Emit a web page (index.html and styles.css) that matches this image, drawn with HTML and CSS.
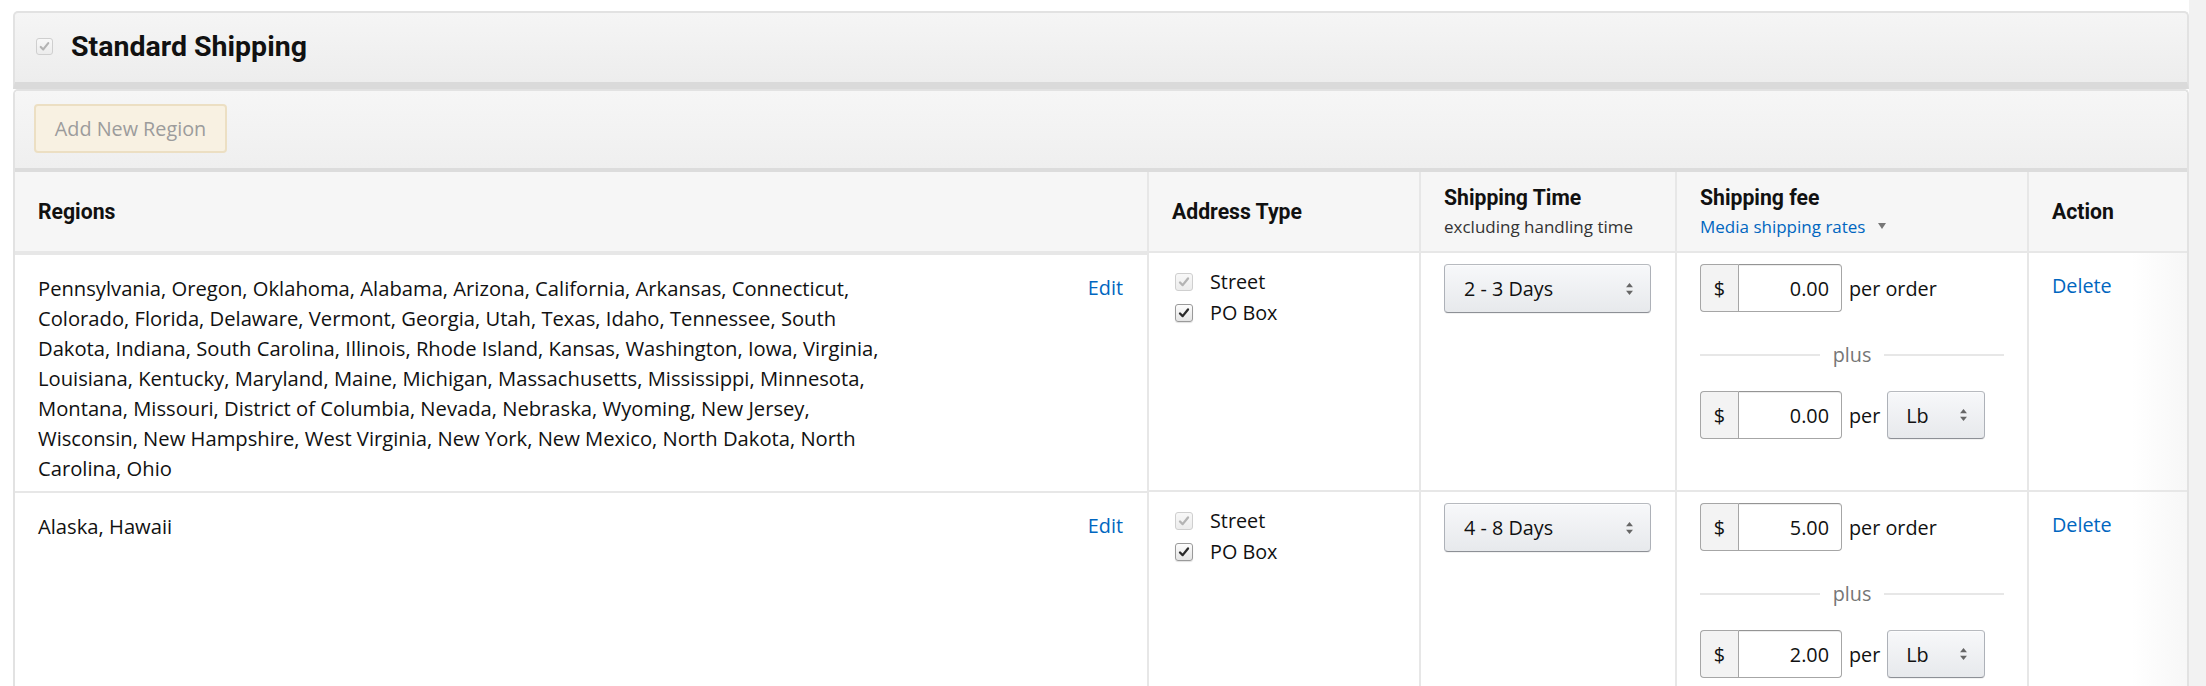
FILE: index.html
```html
<!DOCTYPE html>
<html lang="en">
<head>
    <meta charset="UTF-8">
    <title>Shipping Settings</title>
    <link rel="stylesheet" href="styles.css">
</head>
<body>
    <div class="page">
        <div class="panel-head">
            <span class="cb cb-off"><svg viewBox="0 0 18 18"><path d="M4.5 9.5 L7.5 12.5 L13.5 5"/></svg></span>
            <h2>Standard Shipping</h2>
        </div>

        <div class="panel-body">
            <div class="toolbar">
                <button class="btn-add" disabled>Add New Region</button>
            </div>

            <table class="regions">
                <colgroup>
                    <col style="width: 1133px">
                    <col style="width: 272px">
                    <col style="width: 256px">
                    <col style="width: 352px">
                    <col>
                </colgroup>
                <thead>
                    <tr>
                        <th>Regions</th>
                        <th>Address Type</th>
                        <th>Shipping Time<div class="sub">excluding handling time</div></th>
                        <th>Shipping fee<div class="sub"><a href="#" class="link">Media shipping rates</a> <svg class="caret" viewBox="0 0 8 6"><polygon points="0,0 8,0 4,6"/></svg></div></th>
                        <th>Action</th>
                    </tr>
                </thead>
                <tbody>
                    <tr>
                        <td class="region">
                            <div class="names">Pennsylvania, Oregon, Oklahoma, Alabama, Arizona, California, Arkansas, Connecticut, Colorado, Florida, Delaware, Vermont, Georgia, Utah, Texas, Idaho, Tennessee, South Dakota, Indiana, South Carolina, Illinois, Rhode Island, Kansas, Washington, Iowa, Virginia, Louisiana, Kentucky, Maryland, Maine, Michigan, Massachusetts, Mississippi, Minnesota, Montana, Missouri, District of Columbia, Nevada, Nebraska, Wyoming, New Jersey, Wisconsin, New Hampshire, West Virginia, New York, New Mexico, North Dakota, North Carolina, Ohio</div>
                            <a href="#" class="link">Edit</a>
                        </td>
                        <td class="types">
                            <div class="opt"><span class="cb cb-off"><svg viewBox="0 0 18 18"><path d="M4.5 9.5 L7.5 12.5 L13.5 5"/></svg></span>Street</div>
                            <div class="opt"><span class="cb"><svg viewBox="0 0 18 18"><path d="M4.5 9.5 L7.5 12.5 L13.5 5"/></svg></span>PO Box</div>
                        </td>
                        <td class="time">
                            <div class="select select-days">2 - 3 Days<svg class="arrows" viewBox="0 0 8 14"><polygon points="0,5 4,0 8,5"/><polygon points="0,9 4,14 8,9"/></svg></div>
                        </td>
                        <td class="fee">
                            <div class="fee-line">
                                <div class="money"><span class="cur">$</span><input class="amount" value="0.00"></div>
                                <span class="per">per order</span>
                            </div>
                            <div class="plus">plus</div>
                            <div class="fee-line">
                                <div class="money"><span class="cur">$</span><input class="amount" value="0.00"></div>
                                <span class="per">per</span>
                                <div class="select select-unit">Lb<svg class="arrows" viewBox="0 0 8 14"><polygon points="0,5 4,0 8,5"/><polygon points="0,9 4,14 8,9"/></svg></div>
                            </div>
                        </td>
                        <td class="action"><a href="#" class="link">Delete</a></td>
                    </tr>
                    <tr>
                        <td class="region">
                            <div class="names">Alaska, Hawaii</div>
                            <a href="#" class="link">Edit</a>
                        </td>
                        <td class="types">
                            <div class="opt"><span class="cb cb-off"><svg viewBox="0 0 18 18"><path d="M4.5 9.5 L7.5 12.5 L13.5 5"/></svg></span>Street</div>
                            <div class="opt"><span class="cb"><svg viewBox="0 0 18 18"><path d="M4.5 9.5 L7.5 12.5 L13.5 5"/></svg></span>PO Box</div>
                        </td>
                        <td class="time">
                            <div class="select select-days">4 - 8 Days<svg class="arrows" viewBox="0 0 8 14"><polygon points="0,5 4,0 8,5"/><polygon points="0,9 4,14 8,9"/></svg></div>
                        </td>
                        <td class="fee">
                            <div class="fee-line">
                                <div class="money"><span class="cur">$</span><input class="amount" value="5.00"></div>
                                <span class="per">per order</span>
                            </div>
                            <div class="plus">plus</div>
                            <div class="fee-line">
                                <div class="money"><span class="cur">$</span><input class="amount" value="2.00"></div>
                                <span class="per">per</span>
                                <div class="select select-unit">Lb<svg class="arrows" viewBox="0 0 8 14"><polygon points="0,5 4,0 8,5"/><polygon points="0,9 4,14 8,9"/></svg></div>
                            </div>
                        </td>
                        <td class="action"><a href="#" class="link">Delete</a></td>
                    </tr>
                </tbody>
            </table>
        </div>
    </div>
</body>
</html>
```

FILE: styles.css
```css
body {
    margin: 0;
    font-family: "Open Sans", "Liberation Sans", sans-serif;
    font-size: 19.8px;
    color: #111;
    background: linear-gradient(to right, #fff 2189px, #f2f2f2 2189px);
}
.page {
    padding: 11px 17px 0 13px;
}
.panel-head {
    display: flex;
    align-items: center;
    box-sizing: border-box;
    height: 78px;
    padding: 0 21px 2px;
    border: 2px solid #e2e2e2;
    border-bottom: 7px solid #dadada;
    border-radius: 5px 5px 0 0;
    background: linear-gradient(#f5f5f5, #ededed);
}
.panel-head h2 {
    margin: 0 0 0 18px;
    font-family: Roboto, "Liberation Sans", sans-serif;
    font-size: 28.5px;
    font-weight: 700;
    color: #111;
}
.panel-head .cb {
    width: 17px;
    height: 17px;
}
.panel-body {
    border: 2px solid #e2e2e2;
    border-bottom: 0;
    border-radius: 5px 5px 0 0;
    background: #fff;
}
.toolbar {
    padding: 13px 19px 15px;
    border-bottom: 4px solid #dcdcdc;
    border-radius: 4px 4px 0 0;
    background: linear-gradient(#f6f6f6, #efefef);
}
.btn-add {
    width: 193px;
    height: 49px;
    padding: 0;
    font-family: inherit;
    font-size: 19.8px;
    color: #9c9c9c;
    background: #f8f1e2;
    border: 2px solid #ecdfc3;
    border-radius: 4px;
}
.regions {
    width: 100%;
    border-collapse: collapse;
    table-layout: fixed;
}
.regions th {
    height: 79px;
    padding: 0 23px;
    text-align: left;
    font-family: Roboto, "Liberation Sans", sans-serif;
    font-size: 21.2px;
    font-weight: 700;
    line-height: 25px;
    background: #f6f6f6;
    border-left: 2px solid #e7e7e7;
    border-bottom: 2px solid #e7e7e7;
    vertical-align: middle;
}
.regions th .sub {
    margin-top: 6px;
    font-family: "Open Sans", "Liberation Sans", sans-serif;
    font-size: 17px;
    font-weight: 400;
    line-height: 22px;
    color: #333;
}
.caret {
    width: 8px;
    height: 6px;
    margin-left: 8px;
    fill: #777;
    vertical-align: 4px;
}
.regions td {
    padding: 11px 23px 30px;
    vertical-align: top;
    border-left: 2px solid #e7e7e7;
    border-top: 2px solid #e7e7e7;
}
.regions th:first-child,
.regions td:first-child {
    border-left: 0;
}
.link {
    color: #0066c0;
    text-decoration: none;
}
.regions td.region {
    padding: 18px 24px 8px 23px;
    line-height: 30px;
}
.region {
    display: flex;
    justify-content: space-between;
}
.names {
    width: 856px;
    font-size: 20.2px;
}
.types {
    line-height: 31px;
}
.regions td.types {
    padding-top: 13px;
}
.opt {
    display: flex;
    align-items: center;
    gap: 17px;
    padding-left: 3px;
}
.cb {
    display: inline-flex;
    box-sizing: border-box;
    width: 18px;
    height: 18px;
    border: 1px solid #9a9a9a;
    border-radius: 3px;
    background: linear-gradient(#fdfdfd, #e4e4e4);
    box-shadow: 0 1px 1px rgba(0,0,0,0.12);
}
.cb svg {
    width: 100%;
    height: 100%;
    fill: none;
    stroke: #2a2a2a;
    stroke-width: 2.6;
    stroke-linecap: round;
    stroke-linejoin: round;
}
.cb-off {
    border-color: #cfcfcf;
    background: linear-gradient(#f8f8f8, #ececec);
    box-shadow: none;
}
.cb-off svg {
    stroke: #b4b4b4;
}
.select {
    display: flex;
    align-items: center;
    justify-content: space-between;
    box-sizing: border-box;
    border: 1px solid #adb1b8;
    border-color: #b7babf #adb1b8 #8d9096;
    border-radius: 4px;
    background: linear-gradient(#f7f8fa, #e7e9ec);
    box-shadow: inset 0 1px 0 rgba(255,255,255,0.6), 0 1px 0 rgba(0,0,0,0.05);
}
.select-days {
    width: 207px;
    height: 49px;
    padding: 0 17px 0 19px;
}
.select-unit {
    width: 98px;
    height: 48px;
    margin-left: 7px;
    padding: 0 17px 0 18px;
}
.arrows {
    width: 7px;
    height: 12px;
    fill: #666;
}
.fee-line {
    display: flex;
    align-items: center;
}
.money {
    display: flex;
    height: 48px;
}
.cur {
    display: flex;
    align-items: center;
    justify-content: center;
    box-sizing: border-box;
    width: 38px;
    background: #f3f3f3;
    border: 1px solid #a6a6a6;
    border-right: 0;
    border-radius: 4px 0 0 4px;
}
.amount {
    box-sizing: border-box;
    width: 104px;
    height: 48px;
    padding: 0 12px 0 0;
    font-family: inherit;
    font-size: 19.8px;
    color: #111;
    text-align: right;
    border: 1px solid #a6a6a6;
    border-top-color: #949494;
    border-radius: 0 4px 4px 0;
    box-shadow: inset 0 1px 0 rgba(0,0,0,0.07);
}
.per {
    margin-left: 7px;
}
.plus {
    display: flex;
    align-items: center;
    gap: 13px;
    margin: 28px 0 21px;
    line-height: 30px;
    color: #767676;
}
.plus::before,
.plus::after {
    content: "";
    flex: 1;
    height: 2px;
    background: #e7e7e7;
}
.regions td.action {
    padding-top: 18px;
    line-height: 30px;
    background: linear-gradient(to right, #fff 65%, #f7f7f7);
}
```
